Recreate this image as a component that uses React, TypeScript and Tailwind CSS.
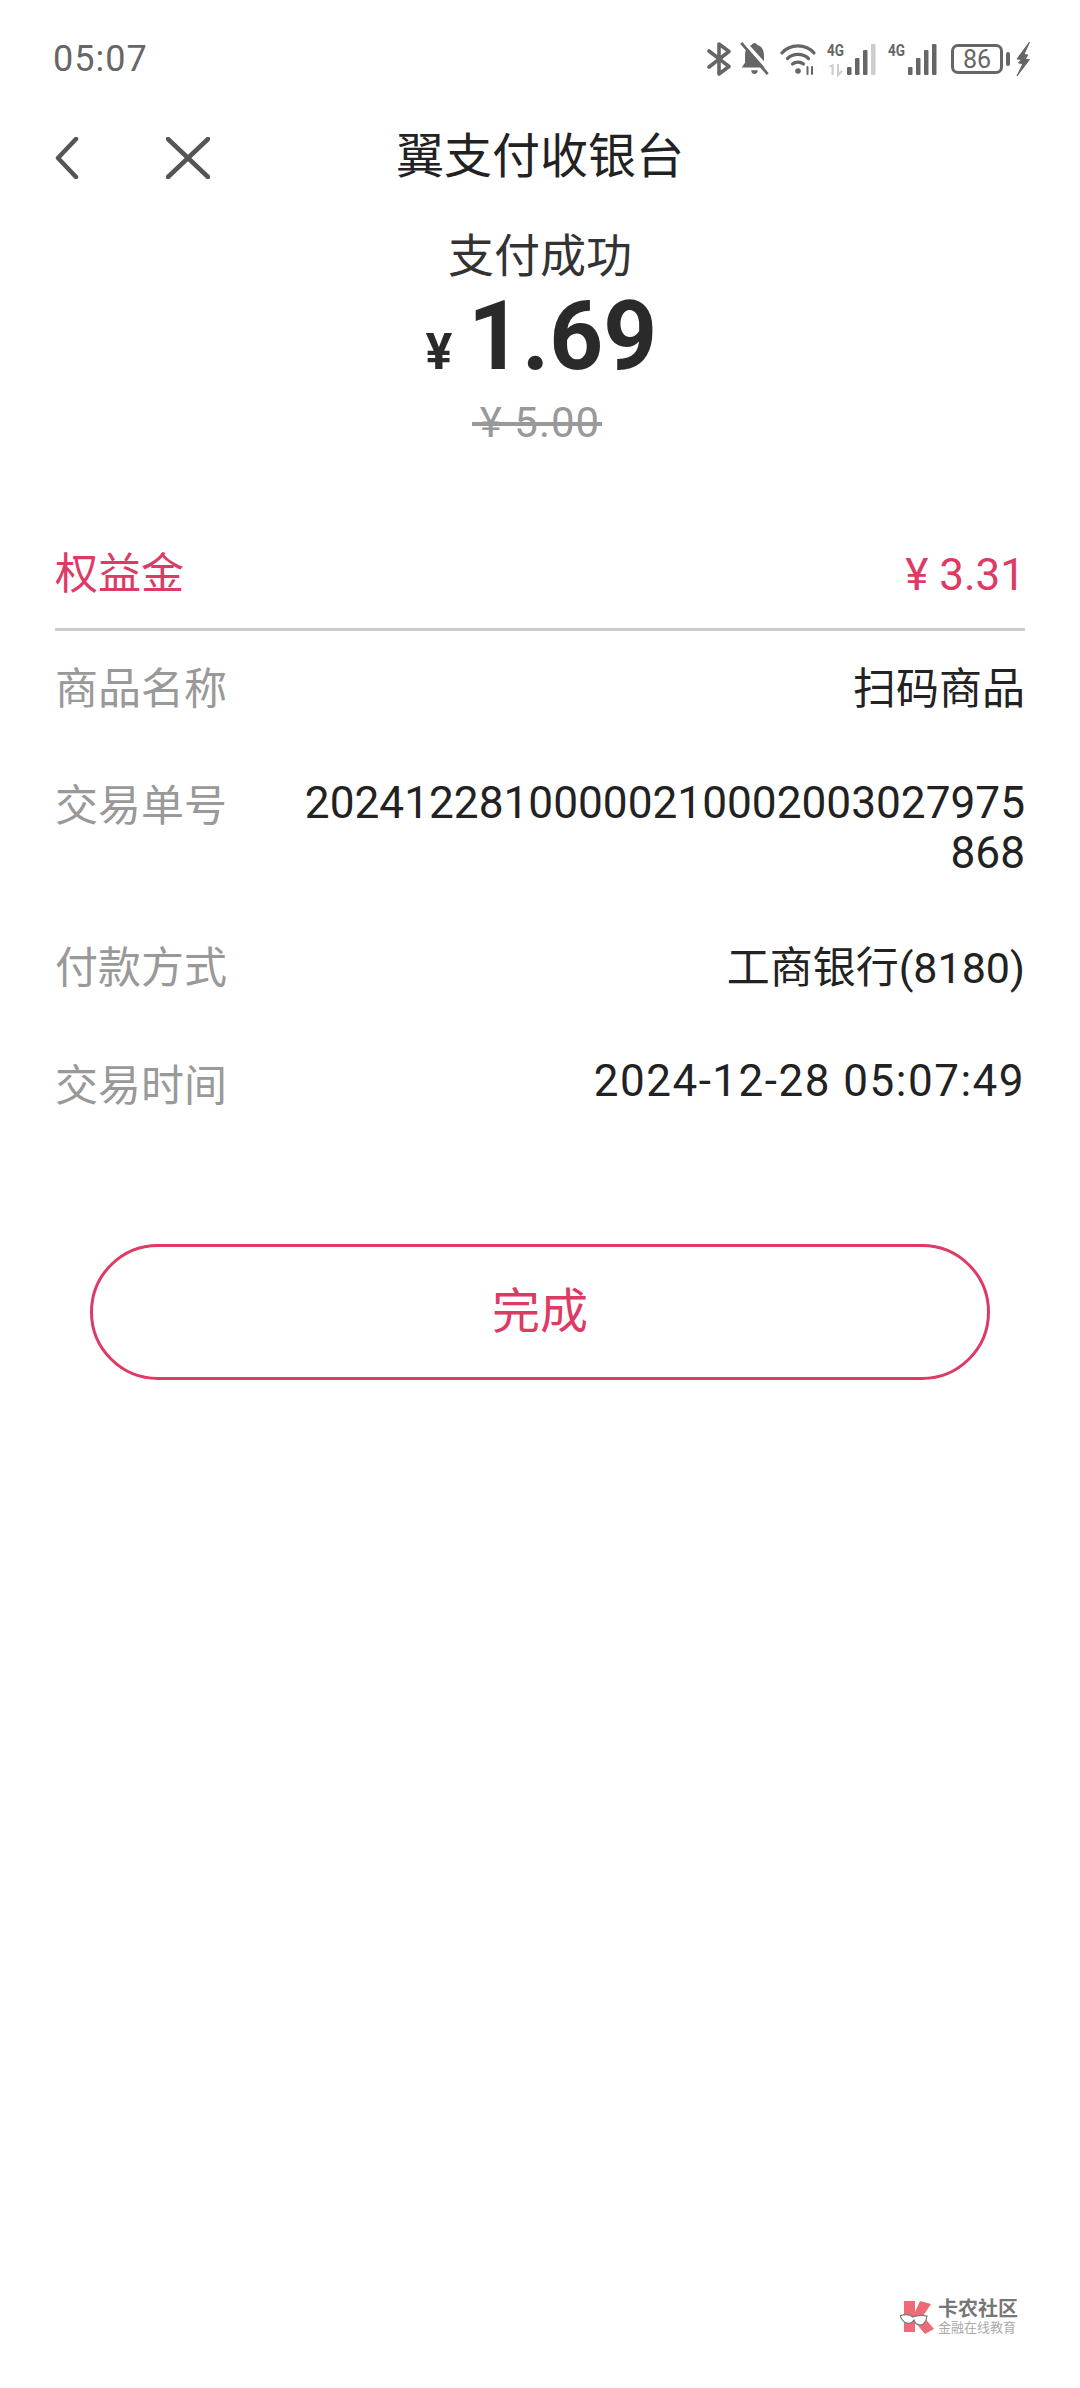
const cjk = "font-['Roboto','Noto_Sans_CJK_SC',sans-serif]";

function Bluetooth() {
  return (
    <svg width="24" height="34" viewBox="0 0 24 34" fill="none" stroke="#666" strokeWidth="3.6" strokeLinejoin="round" strokeLinecap="round">
      <path d="M2 9 22 24.500 12 32V2L22 9.500 2 25" />
    </svg>
  );
}

function BellOff() {
  return (
    <svg width="29" height="34" viewBox="0 0 30 36">
      <path d="M15 1c1.600 0 2.700 1 2.900 2.300C22.500 4.600 25 8.500 25 14v8l3.500 5H1.500L5 22v-8c0-5.500 2.500-9.400 7.100-10.700C12.300 2 13.400 1 15 1z" fill="#666" />
      <path d="M11.500 30h7c0 2.500-1.500 4-3.500 4s-3.500-1.500-3.500-4z" fill="#666" />
      <path d="M3 -1 32 31" stroke="#fff" strokeWidth="4" />
      <path d="M1 1 29 34" stroke="#666" strokeWidth="3" />
    </svg>
  );
}

function Wifi() {
  return (
    <svg width="36" height="32" viewBox="0 0 36 32" fill="none" stroke="#666" strokeWidth="3.2" strokeLinecap="round">
      <path d="M2 10C10 0.500 26 0.500 34 10" />
      <path d="M7.500 15.500c5.500-5.500 15.500-5.500 21 0" />
      <path d="M12.500 21c3-2.500 8-2.500 11 0" />
      <circle cx="18" cy="28" r="2.800" fill="#666" stroke="none" />
      <path d="M27.500 24v7M32 24v7" strokeWidth="2" />
    </svg>
  );
}

function Signal({ faded }: { faded?: boolean }) {
  const bars = [
    { x: 20, h: 8 },
    { x: 28, h: 17 },
    { x: 36, h: 25 },
    { x: 44, h: 31 },
  ];
  return (
    <svg width="49" height="34" viewBox="0 0 49 34" className="overflow-visible">
      <text x="0" y="14" fontSize="17" fontWeight="700" fill="#666" fontFamily="Roboto, sans-serif" textLength="17" lengthAdjust="spacingAndGlyphs">4G</text>
      {faded && <text x="1" y="33" fontSize="14" fontWeight="700" fill="#ccc" fontFamily="Roboto, sans-serif">1</text>}
      {faded && <path d="M11 22v11l4-4" fill="none" stroke="#ccc" strokeWidth="2" />}
      {bars.map((b, i) => (
        <rect key={b.x} x={b.x} y={33 - b.h} width="4.500" height={b.h} rx="1" fill={faded && i === 3 ? "#ccc" : "#666"} />
      ))}
    </svg>
  );
}

function Bolt() {
  return (
    <svg width="14" height="34" viewBox="0 0 14 34">
      <path d="M13.500 0 1 17l4.500.5-3 3.500 4.500.5L1 34l12.500-16.500L9 17l3-4-4-.5z" fill="#666" stroke="#666" strokeWidth="1" />
    </svg>
  );
}

function Logo() {
  return (
    <svg width="36" height="36" viewBox="0 0 36 36">
      <path d="M4 2h11v11l5-11 11 3-8 12 11 13-9 5-10-12v10H4z" fill="#ee6a78" />
      <path d="M0 17c5-2 9-2 13 1 4-2 9-2 14-1-1 6-3 9-7 9-3 0-5-2-6-5-2 3-4 4-7 3-3 0-5-3-7-7z" fill="#fff" stroke="#777" strokeWidth="1.200" />
    </svg>
  );
}

export default function App() {
  return (
    <div className={`relative min-h-[2388px] w-[1080px] bg-white text-[#222] ${cjk}`}>
      {/* Status bar */}
      <div className="flex h-[118px] items-center justify-between pr-[50px] pl-[53px]">
        <span className="text-[36px] tracking-[1px] text-[#666]">05:07</span>
        <div className="flex items-center">
          <div className="mr-[9px]"><Bluetooth /></div>
          <div className="mr-[11px]"><BellOff /></div>
          <div className="mr-[11px]"><Wifi /></div>
          <div className="mr-[12px]"><Signal faded /></div>
          <div className="mr-[14px]"><Signal /></div>
          <div className="flex h-[30px] w-[52px] items-center justify-center rounded-[7px] border-[3px] border-[#666] text-[25px] leading-none text-[#666]">86</div>
          <div className="mr-[6px] ml-[3px] h-[14px] w-[4px] rounded-sm bg-[#666]" />
          <Bolt />
        </div>
      </div>

      {/* Nav */}
      <div className="relative flex h-[78px] items-center justify-center">
        <div className="absolute top-[19px] left-[55px] flex items-center gap-[87px]">
          <svg width="24" height="42" viewBox="0 0 24 42" fill="none" stroke="#555" strokeWidth="4.500" strokeLinecap="round" strokeLinejoin="round">
            <path d="M21 2 3 21l18 19" />
          </svg>
          <svg width="44" height="42" viewBox="0 0 44 42" fill="none" stroke="#555" strokeWidth="4.500" strokeLinecap="round">
            <path d="M2 2l40 38M42 2 2 40" />
          </svg>
        </div>
        <h1 className="text-[48px] leading-none font-normal text-[#222]">翼支付收银台</h1>
      </div>

      {/* Amount */}
      <div className="mt-[30px] flex flex-col items-center">
        <p className="text-[46px] leading-[60px] text-[#333]">支付成功</p>
        <div className="mt-[2px] flex h-[96px] items-baseline justify-center">
          <span className="mr-[16px] text-[50px] leading-[96px] font-bold text-[#2a2a2a]">¥</span>
          <span className="w-[186px] origin-left scale-x-[0.97] text-[97px] leading-[96px] font-bold whitespace-nowrap text-[#2a2a2a]">1.69</span>
        </div>
        <div className="relative mt-[12px]">
          <p className="text-[42px] leading-[54px] tracking-[1px] text-[#999]">¥ 5.00</p>
          <div className="absolute top-[26px] right-[-2px] left-[-8px] h-[4px] bg-[#999]" />
        </div>
      </div>

      {/* Discount */}
      <div className="mx-[55px] mt-[81px] flex h-[100px] items-center justify-between border-b-[3px] border-[#ccc] pb-[10px]">
        <span className="text-[43px] text-[#dd3a64]">权益金</span>
        <span className="text-[44px] text-[#dd3a64]">¥ 3.31</span>
      </div>

      {/* Details */}
      <div className="mx-[55px] mt-[20px] flex flex-col text-[43px]">
        <div className="flex h-[76px] items-center justify-between">
          <span className="text-[#999]">商品名称</span>
          <span>扫码商品</span>
        </div>
        <div className="mt-[51px] flex h-[104px] items-start justify-between">
          <span className="mt-[3px] leading-[50px] text-[#999]">交易单号</span>
          <span className="flex flex-col items-end text-[44.2px] leading-[50px]">
            <span>20241228100000210002003027975</span>
            <span>868</span>
          </span>
        </div>
        <div className="mt-[48px] flex h-[76px] items-center justify-between">
          <span className="text-[#999]">付款方式</span>
          <span>工商银行(8180)</span>
        </div>
        <div className="mt-[42px] flex h-[76px] items-center justify-between">
          <span className="text-[#999]">交易时间</span>
          <span className="mb-[10px] text-[44px] tracking-[1.5px]">2024-12-28 05:07:49</span>
        </div>
      </div>

      {/* Done */}
      <button className="mx-auto mt-[120px] flex h-[136px] w-[900px] items-center justify-center rounded-full border-[3px] border-[#dd3a64] text-[48px] text-[#dd3a64]">
        完成
      </button>

      {/* Watermark */}
      <div className="absolute top-[2298px] left-[900px] flex items-center gap-[2px]">
        <Logo />
        <div className="flex flex-col">
          <span className="text-[20px] leading-[22px] font-bold text-[#777]">卡农社区</span>
          <span className="text-[13px] leading-[16px] text-[#aaa]">金融在线教育</span>
        </div>
      </div>
    </div>
  );
}
